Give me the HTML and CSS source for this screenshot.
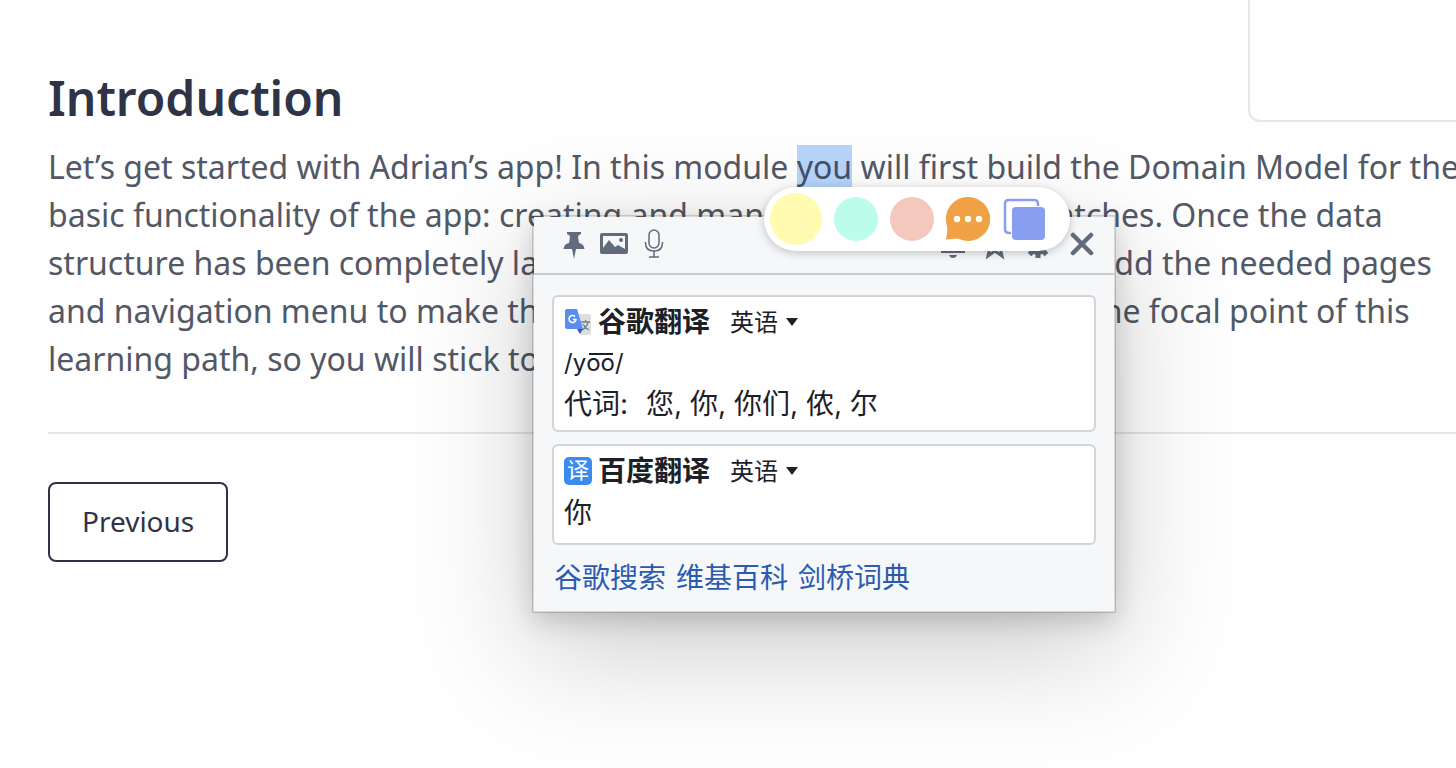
FILE: index.html
```html
<!DOCTYPE html>
<html lang="en">
<head>
  <meta charset="UTF-8" />
  <title>Introduction</title>
  <link rel="stylesheet" href="styles.css">
</head>
<body>
  <main class="page">
    <header class="top">
      <h1>Introduction</h1>
      <div class="panel"></div>
    </header>

    <p class="intro">
      Let’s get started with Adrian’s app! In this module <mark>you</mark> will first build the Domain Model for the<br>
      basic functionality of the app: creating and managing the weekly matches. Once the data<br>
      structure has been completely laid out, you will be able to design and add the needed pages<br>
      and navigation menu to make this app simple to read. The Domain is the focal point of this<br>
      learning path, so you will stick to the basics.
    </p>

    <hr />

    <button type="button" class="previous">Previous</button>
  </main>

  <section class="popup" lang="zh-CN">
    <div class="popup-bar">
      <button type="button" aria-label="固定">
        <svg width="28" height="32" viewBox="0 0 28 32"><path d="M7 4h14v2q-3 1-3 3l1 6q5 1 5.500 6h-8.500l-2 10-2-10H3.500q.5-5 5.500-6l1-6q0-2-3-3z" fill="#626b7b"/></svg>
      </button>
      <button type="button" aria-label="图片">
        <svg width="28" height="32" viewBox="0 0 28 32"><path fill-rule="evenodd" d="M2 5h24q2 0 2 2v17q0 2-2 2H2q-2 0-2-2V7q0-2 2-2zM3 8v12l6-8 6 7 3-2 7 4V8z" fill="#626b7b"/><circle cx="21" cy="12" r="2" fill="#626b7b"/></svg>
      </button>
      <button type="button" aria-label="语音">
        <svg width="28" height="32" viewBox="0 0 28 32" fill="none" stroke="#626b7b" stroke-width="1.500"><rect x="9" y="2" width="10" height="18" rx="5"/><path d="M5.500 14v1q0 8 8.500 8t8.500-8v-1M14 23v6M9 29h10"/></svg>
      </button>
      <span class="spacer"></span>
      <button type="button" aria-label="提醒">
        <svg width="28" height="32" viewBox="0 0 28 32"><path d="M14 2q8 0 8 9v8l4 4v2H2v-2l4-4v-8q0-9 8-9zM10 27h8q-1 3-4 3t-4-3z" fill="#626b7b"/></svg>
      </button>
      <button type="button" aria-label="收藏">
        <svg width="28" height="32" viewBox="0 0 28 32"><path d="M13 5l3 8h8l-6 6 2 9-7-5-7 5 2-9-6-6h8z" fill="none" stroke="#626b7b" stroke-width="3"/></svg>
      </button>
      <button type="button" aria-label="设置">
        <svg width="28" height="32" viewBox="0 0 28 32"><circle cx="13" cy="18" r="7" fill="none" stroke="#626b7b" stroke-width="4"/><path d="M13 6v4M13 26v4M1 18h4M21 18h4M4.500 9.500l3 3M18.500 23.500l3 3M21.500 9.500l-3 3M7.500 23.500l-3 3" stroke="#626b7b" stroke-width="5"/></svg>
      </button>
      <button type="button" aria-label="关闭">
        <svg width="28" height="32" viewBox="0 0 28 32"><path d="M5 7l18 18M23 7L5 25" stroke="#626b7b" stroke-width="4.500" stroke-linecap="round"/></svg>
      </button>
    </div>

    <div class="popup-body">
      <article class="result">
        <div class="result-head">
          <svg class="logo" width="28" height="28" viewBox="0 0 28 28">
            <path d="M13 6h12q2 0 2 2v17q0 2-2 2H17z" fill="#dcdee0"/>
            <path d="M17 14h9M21.500 12v2M24 14q-1 5-6 8M19 16q2 4 6 6" fill="none" stroke="#71858f" stroke-width="1.300"/>
            <path d="M13 21h6l-3 5z" fill="#3653c4"/>
            <path d="M3 1h10l6 20H3q-2 0-2-2V3q0-2 2-2z" fill="#5a8df0"/>
            <path d="M11 8.500a3.500 3.500 0 1 0 1 3H9" fill="none" stroke="#fff" stroke-width="1.600"/>
          </svg>
          <h2>谷歌翻译</h2>
          <label class="lang">
            <select aria-label="语言"><option>英语</option></select>
            <svg width="12" height="8" viewBox="0 0 12 8"><path d="M0 0h12L6 8z" fill="#1c2027"/></svg>
          </label>
        </div>
        <p class="phonetic">/y<span class="long">oo</span>/</p>
        <p><span class="word-class">代词:</span>您, 你, 你们, 侬, 尔</p>
      </article>

      <article class="result">
        <div class="result-head">
          <span class="logo baidu">译</span>
          <h2>百度翻译</h2>
          <label class="lang">
            <select aria-label="语言"><option>英语</option></select>
            <svg width="12" height="8" viewBox="0 0 12 8"><path d="M0 0h12L6 8z" fill="#1c2027"/></svg>
          </label>
        </div>
        <p>你</p>
      </article>

      <nav class="links">
        <a href="#">谷歌搜索</a>
        <a href="#">维基百科</a>
        <a href="#">剑桥词典</a>
      </nav>
    </div>
  </section>

  <div class="marker">
    <button type="button" class="dot yellow" aria-label="Yellow"></button>
    <button type="button" class="dot mint" aria-label="Mint"></button>
    <button type="button" class="dot pink" aria-label="Pink"></button>
    <button type="button" class="dot" aria-label="Comment">
      <svg width="44" height="44" viewBox="0 0 44 44"><path d="M22 0a22 22 0 1 1-10 41.500Q7 42 1 42.500q-1 0-1-1Q2 35 1 29A22 22 0 0 1 22 0z" fill="#f0a144"/><g fill="#fff"><circle cx="11" cy="22" r="3.200"/><circle cx="22" cy="22" r="3.200"/><circle cx="33" cy="22" r="3.200"/></g></svg>
    </button>
    <button type="button" class="dot" aria-label="Copy">
      <svg width="44" height="44" viewBox="0 0 44 44"><path d="M36 9V7q0-4-4-4H7Q3 3 3 7v25q0 4 4 4h2" fill="none" stroke="#8a9eef" stroke-width="2.500"/><rect x="10" y="10" width="33" height="33" rx="4" fill="#8a9eef"/></svg>
    </button>
  </div>
</body>
</html>
```
FILE: styles.css
```css
* {
  box-sizing: border-box;
}

body {
  margin: 0;
  min-height: 100vh;
  overflow: hidden;
  background: #fefefe;
  font-family: "Noto Sans", "Noto Sans CJK SC", sans-serif;
  color: #525866;
}

h1, h2, p {
  margin: 0;
}

button {
  font-family: inherit;
  cursor: pointer;
}

.page {
  padding-left: 48px;
}

.top {
  display: flex;
  justify-content: space-between;
  align-items: flex-start;
}

.top h1 {
  margin-top: 66px;
  font-size: 48px;
  line-height: 64px;
  font-weight: 600;
  color: #2e3445;
}

.panel {
  width: 208px;
  height: 122px;
  border: 2px solid #e7e7e7;
  border-width: 0 0 2px 2px;
  border-bottom-left-radius: 12px;
}

.intro {
  margin-top: 13px;
  font-size: 32px;
  line-height: 48px;
  white-space: nowrap;
}

.intro mark {
  background: #b7d4fa;
  color: #44506a;
}

hr {
  border: none;
  border-top: 2px solid #e5e5e5;
  margin: 49px 0 48px;
}

.previous {
  height: 80px;
  padding: 0 32px 2px;
  background: #fff;
  border: 2px solid #2e3445;
  border-radius: 8px;
  font-size: 28px;
  color: #2e3445;
}

/* translation popup */
.popup {
  position: absolute;
  left: 532px;
  top: 215px;
  width: 584px;
  background: #f5f7f9;
  background-clip: padding-box;
  border: 2px solid rgba(0, 0, 0, 0.15);
  box-shadow: 0 8px 24px rgba(0, 0, 0, 0.16), 0 36px 110px rgba(0, 0, 0, 0.2);
  font-family: Inter, "Noto Sans CJK SC", sans-serif;
  font-size: 28px;
  line-height: 42px;
  color: #1c2027;
}

.popup-bar {
  display: flex;
  align-items: center;
  gap: 15px;
  height: 58px;
  padding: 0 18px 2px 26px;
  border-bottom: 2px solid #c9cbce;
}

.popup-bar button {
  display: flex;
  padding: 0;
  border: none;
  background: none;
}

.popup-bar button:nth-child(-n+2) {
  margin-right: -3px;
}

.spacer {
  flex: 1;
}

.popup-body {
  padding: 20px 18px 12px;
}

.result {
  padding: 4px 10px 5px;
  margin-bottom: 12px;
  background: #fff;
  border: 2px solid #d3d5d8;
  border-radius: 6px;
}

.result:nth-child(2) {
  padding-bottom: 9px;
}

.result-head {
  display: flex;
  align-items: center;
}

.logo {
  width: 28px;
  height: 28px;
  margin-right: 6px;
}

.baidu {
  border-radius: 5px;
  background: #3b8af0;
  color: #fff;
  font-size: 22px;
  line-height: 26px;
  text-align: center;
}

.result h2 {
  font-size: 28px;
  font-weight: 700;
}

.lang {
  display: flex;
  align-items: center;
  gap: 8px;
  margin-left: 20px;
}

.lang select {
  appearance: none;
  width: 48px;
  padding: 0;
  border: none;
  background: none;
  font-family: inherit;
  font-size: 24px;
  color: inherit;
}

.phonetic {
  font-size: 24px;
  line-height: 40px;
}

/* one bar over both vowels */
.long {
  position: relative;
}

.long::before {
  content: "";
  position: absolute;
  left: 3px;
  right: 2px;
  top: 5px;
  height: 2px;
  background: currentColor;
}

.word-class {
  margin-right: 18px;
}

.links {
  display: flex;
  gap: 10px;
  padding-left: 2px;
}

.links a {
  color: #2b5baf;
  text-decoration: none;
}

/* highlighter toolbar */
.marker {
  position: absolute;
  left: 764px;
  top: 187px;
  display: flex;
  align-items: center;
  gap: 12px;
  width: 306px;
  height: 64px;
  padding: 6px;
  background: #fff;
  border-radius: 32px;
  box-shadow: 0 2px 10px rgba(0, 0, 0, 0.22);
}

.dot {
  display: flex;
  width: 44px;
  height: 44px;
  padding: 0;
  border: none;
  border-radius: 50%;
  background: none;
}

.yellow {
  width: 52px;
  height: 52px;
  background: #fffcb1;
}

.mint {
  background: #bbfdea;
}

.pink {
  background: #f5c8bd;
}
```
